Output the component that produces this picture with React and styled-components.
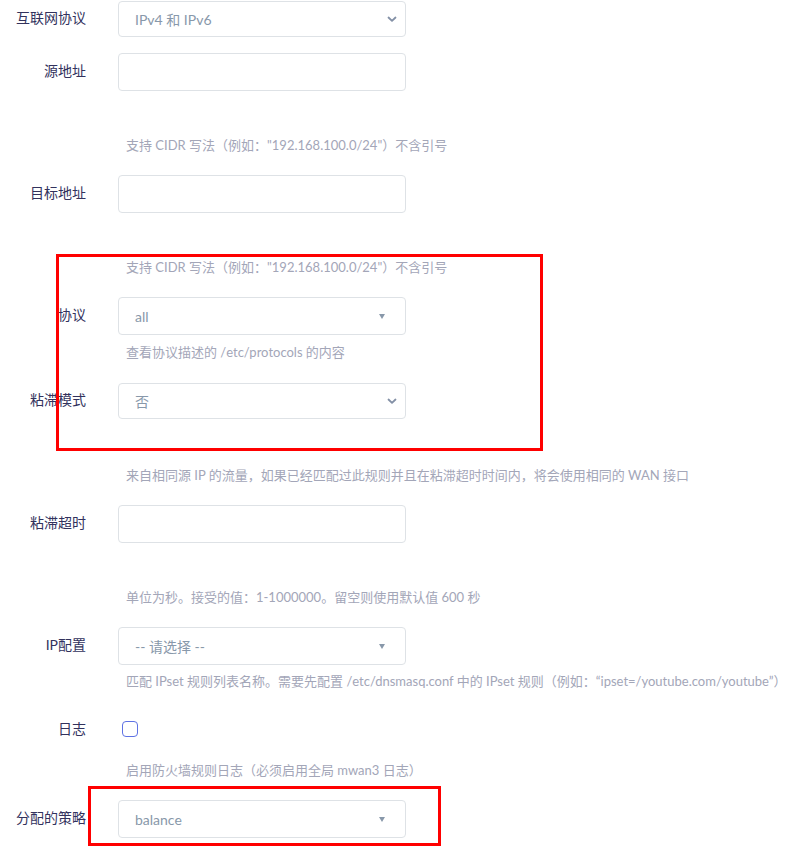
import React from "react";
import styled, { createGlobalStyle } from "styled-components";

const Global = createGlobalStyle`
  html, body { margin: 0; padding: 0; background: #ffffff; }
  body {
    font-family: "Lato", "Noto Sans CJK SC", sans-serif;
    color: #32325d;
  }
  * { box-sizing: border-box; }
`;

const Page = styled.div`
  position: relative;
  width: 799px;
  height: 848px;
  overflow: hidden;
  background: #fff;
`;

const Field = styled.div`
  margin-bottom: ${(p) => p.$after}px;
`;

const Row = styled.div`
  display: flex;
  align-items: center;
  height: 38px;
  gap: 32px;
`;

const Label = styled.label`
  width: 86px;
  flex: 0 0 86px;
  text-align: right;
  font-size: 14px;
  line-height: 20px;
  margin-top: -2px;
  color: #32325d;
  white-space: nowrap;
`;

const Control = styled.div`
  width: 288px;
  height: ${(p) => (p.$native ? 36 : 38)}px;
  border: 1px solid #dee2e6;
  border-radius: 4px;
  background: #fff;
  display: flex;
  align-items: center;
  justify-content: space-between;
  padding: 0 ${(p) => (p.$native ? 8 : 20)}px 0 16px;
  font-size: 14px;
  color: #8898aa;
`;

const Check = styled.span`
  display: inline-block;
  width: 16px;
  height: 16px;
  margin-left: 4px;
  margin-top: -2px;
  border: 1px solid #5e72e4;
  border-radius: 4px;
  background: #fff;
`;

const Help = styled.div`
  margin-top: ${(p) => p.$gap}px;
  padding-left: 126px;
  font-size: 13px;
  line-height: 20px;
  color: #a3a6b8;
  white-space: nowrap;
`;

const Triangle = styled.span`
  width: 0;
  height: 0;
  border-left: 3.5px solid transparent;
  border-right: 3.5px solid transparent;
  border-top: 5px solid #8898aa;
`;

const Chevron = () => (
  <svg width="10" height="7" viewBox="0 0 10 7">
    <path d="M1.5 1.5 L5 4.8 L8.5 1.5" fill="none" stroke="#8390a6" strokeWidth="1.8" strokeLinecap="round" strokeLinejoin="round" />
  </svg>
);

const Mark = styled.div`
  position: absolute;
  left: ${(p) => p.$x}px;
  top: ${(p) => p.$y}px;
  width: ${(p) => p.$w}px;
  height: ${(p) => p.$h}px;
  border: 3px solid #ff0000;
  pointer-events: none;
`;

const fields = [
  { label: "互联网协议", kind: "native", value: "IPv4 和 IPv6", after: 15 },
  { label: "源地址", kind: "input", help: "支持 CIDR 写法（例如：\"192.168.100.0/24\"）不含引号", gap: 44, after: 20 },
  { label: "目标地址", kind: "input", help: "支持 CIDR 写法（例如：\"192.168.100.0/24\"）不含引号", gap: 44, after: 20 },
  { label: "协议", kind: "select", value: "all", help: "查看协议描述的 /etc/protocols 的内容", gap: 7, after: 20 },
  { label: "粘滞模式", kind: "native", value: "否", help: "来自相同源 IP 的流量，如果已经匹配过此规则并且在粘滞超时时间内，将会使用相同的 WAN 接口", gap: 45, after: 20 },
  { label: "粘滞超时", kind: "input", help: "单位为秒。接受的值：1-1000000。留空则使用默认值 600 秒", gap: 44, after: 20 },
  { label: "IP配置", kind: "select", value: "-- 请选择 --", help: "匹配 IPset 规则列表名称。需要先配置 /etc/dnsmasq.conf 中的 IPset 规则（例如：“ipset=/youtube.com/youtube”）", gap: 6, after: 20 },
  { label: "日志", kind: "check", help: "启用防火墙规则日志（必须启用全局 mwan3 日志）", gap: 11, after: 20 },
  { label: "分配的策略", kind: "select", value: "balance", after: 0 },
];

function renderControl(f) {
  if (f.kind === "check") return <Check />;
  if (f.kind === "input") return <Control />;
  if (f.kind === "native")
    return (
      <Control $native>
        <span>{f.value}</span>
        <Chevron />
      </Control>
    );
  return (
    <Control>
      <span>{f.value}</span>
      <Triangle />
    </Control>
  );
}

export default function App() {
  return (
    <Page>
      <Global />
      {fields.map((f) => (
        <Field key={f.label} $after={f.after}>
          <Row>
            <Label>{f.label}</Label>
            {renderControl(f)}
          </Row>
          {f.help && <Help $gap={f.gap}>{f.help}</Help>}
        </Field>
      ))}
      <Mark $x={56} $y={254} $w={487} $h={197} />
      <Mark $x={88} $y={786} $w={353} $h={60} />
    </Page>
  );
}
